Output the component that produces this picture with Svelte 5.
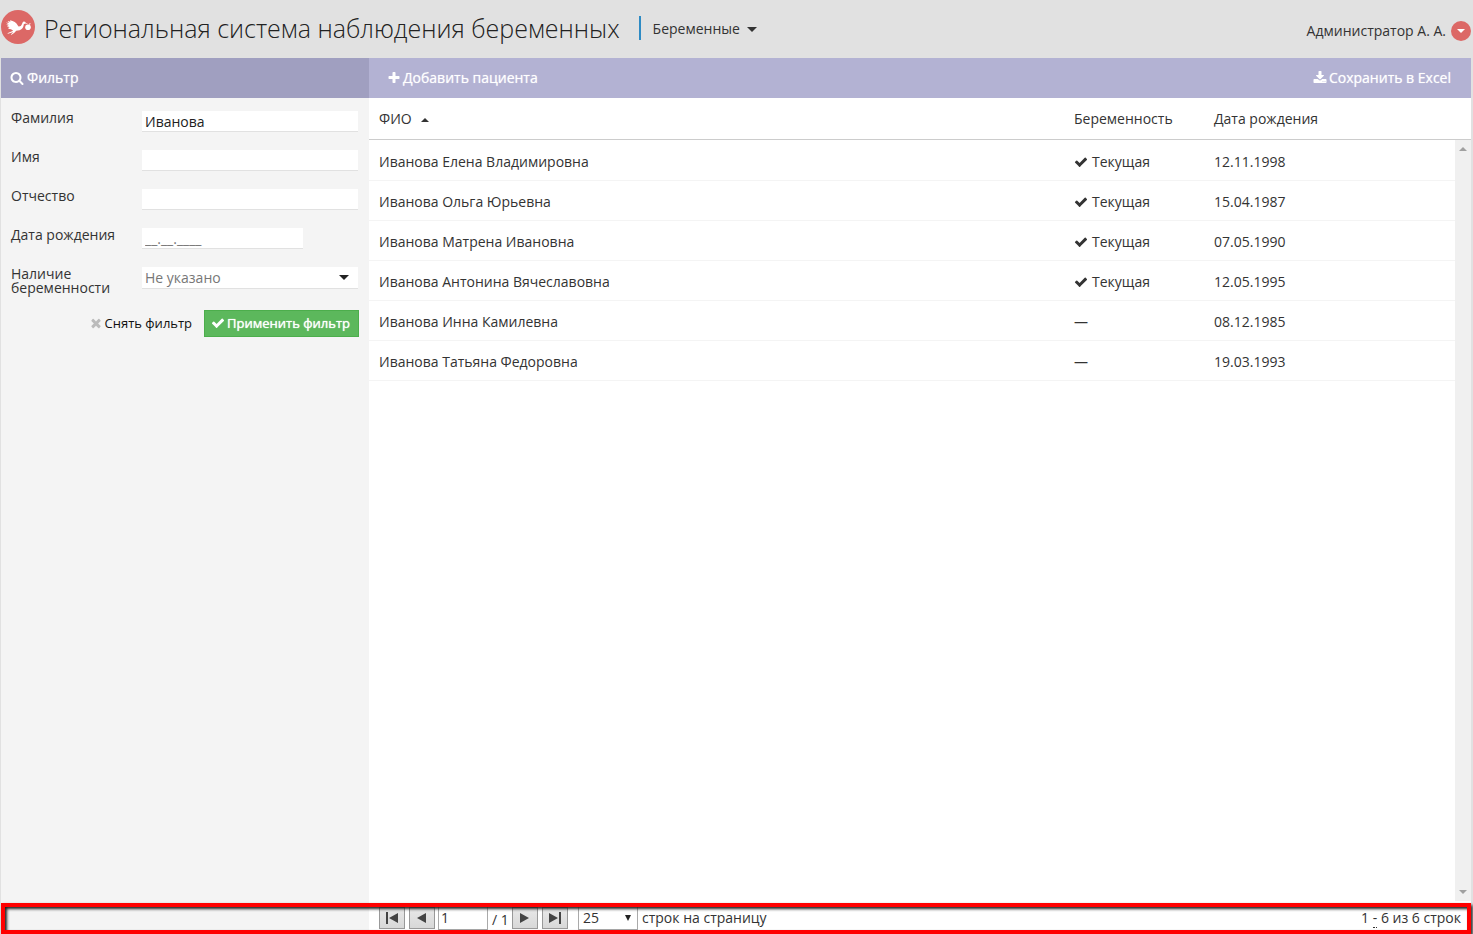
<script lang="ts">
  const patients = [
    { name: 'Иванова Елена Владимировна', current: true, born: '12.11.1998' },
    { name: 'Иванова Ольга Юрьевна', current: true, born: '15.04.1987' },
    { name: 'Иванова Матрена Ивановна', current: true, born: '07.05.1990' },
    { name: 'Иванова Антонина Вячеславовна', current: true, born: '12.05.1995' },
    { name: 'Иванова Инна Камилевна', current: false, born: '08.12.1985' },
    { name: 'Иванова Татьяна Федоровна', current: false, born: '19.03.1993' }
  ];
  let surname = $state('Иванова');
  let firstName = $state('');
  let patronymic = $state('');
  let birth = $state('');
  let page = $state('1');

  const icons = {
    check: 'M1671 566q0 40-28 68l-724 724-136 136q-28 28-68 28t-68-28l-136-136-362-362q-28-28-28-68t28-68l136-136q28-28 68-28t68 28l294 295 656-657q28-28 68-28t68 28l136 136q28 28 28 68z',
    search: 'M1216 832q0-185-131.5-316.5t-316.5-131.5-316.5 131.5-131.5 316.5 131.5 316.5 316.5 131.5 316.5-131.5 131.5-316.5zm512 832q0 52-38 90t-90 38q-54 0-90-38l-343-342q-179 124-399 124-143 0-273.5-55.5t-225-150-150-225-55.5-273.5 55.5-273.5 150-225 225-150 273.5-55.5 273.5 55.5 225 150 150 225 55.5 273.5q0 220-124 399l343 343q37 37 37 90z',
    plus: 'M1600 736v192q0 40-28 68t-68 28h-416v416q0 40-28 68t-68 28h-192q-40 0-68-28t-28-68v-416h-416q-40 0-68-28t-28-68v-192q0-40 28-68t68-28h416v-416q0-40 28-68t68-28h192q40 0 68 28t28 68v416h416q40 0 68 28t28 68z',
    times: 'M1490 1322q0 40-28 68l-136 136q-28 28-68 28t-68-28l-294-294-294 294q-28 28-68 28t-68-28l-136-136q-28-28-28-68t28-68l294-294-294-294q-28-28-28-68t28-68l136-136q28-28 68-28t68 28l294 294 294-294q28-28 68-28t68 28l136 136q28 28 28 68t-28 68l-294 294 294 294q28 28 28 68z',
    download: 'M1344 1344q0-26-19-45t-45-19-45 19-19 45 19 45 45 19 45-19 19-45zm256 0q0-26-19-45t-45-19-45 19-19 45 19 45 45 19 45-19 19-45zm128-224v320q0 40-28 68t-68 28h-1472q-40 0-68-28t-28-68v-320q0-40 28-68t68-28h465l135 136q58 56 136 56t136-56l136-136h464q40 0 68 28t28 68zm-325-569q17 41-14 70l-448 448q-18 19-45 19t-45-19l-448-448q-31-29-14-70 17-39 59-39h256v-448q0-26 19-45t45-19h256q26 0 45 19t19 45v448h256q42 0 59 39z'
  };
</script>

{#snippet icon(d: string)}
  <svg class="icon" viewBox="0 0 1792 1792" aria-hidden="true"><path {d} /></svg>
{/snippet}

<div class="app">
  <header>
    <svg class="logo" viewBox="0 0 34 34" aria-hidden="true">
      <circle cx="17" cy="17" r="17" fill="#dc6866" />
      <path fill="#fff" d="M5 12.6 8 12.9 6.6 11 9.4 11.7 9 10.2Q14.6 11 16.8 15.4L17.6 16.4Q20.2 16.6 20.9 14.2L21.6 12.4Q22.4 11.1 24 11.8L25 13 28 14.4 24.2 13.6 22.8 14.2Q22.6 18.6 18.6 20.2L15.2 20.8 13.4 22.8 10.6 24.8 9.8 24.4 12.4 22 7 23.8 6.4 23.3 12.2 20.8 10 19.2 6.8 18.8 8.6 17.8 5.8 16.6 8 16.2 5.2 14.6 7.8 14.5Z" />
      <circle cx="27" cy="17.2" r="2.8" fill="#fff" />
      <path d="m28.4 13.2 1.6.6-2.2 1.2z" fill="#fff" />
    </svg>
    <h1>Региональная система наблюдения беременных</h1>
    <button class="section">Беременные <span class="caret"></span></button>
    <button class="user">Администратор А. А. <span class="disc"><span class="caret light"></span></span></button>
  </header>

  <div class="body">
    <aside>
      <h2 class="bar">{@render icon(icons.search)}Фильтр</h2>
      <form onsubmit={(e) => e.preventDefault()}>
        <div class="field"><label for="surname">Фамилия</label><input id="surname" type="text" bind:value={surname} /></div>
        <div class="field"><label for="first">Имя</label><input id="first" type="text" bind:value={firstName} /></div>
        <div class="field"><label for="patronymic">Отчество</label><input id="patronymic" type="text" bind:value={patronymic} /></div>
        <div class="field"><label for="birth">Дата рождения</label><input id="birth" class="date" type="text" placeholder="__.__.____" bind:value={birth} /></div>
        <div class="field">
          <label for="pregnancy">Наличие беременности</label>
          <div class="choice">
            <select id="pregnancy"><option>Не указано</option></select>
            <span class="caret"></span>
          </div>
        </div>
        <div class="actions">
          <button type="reset" class="clear">{@render icon(icons.times)}Снять фильтр</button>
          <button type="submit" class="apply">{@render icon(icons.check)}Применить фильтр</button>
        </div>
      </form>
    </aside>

    <main>
      <div class="bar tools">
        <button>{@render icon(icons.plus)}Добавить пациента</button>
        <button>{@render icon(icons.download)}Сохранить в Excel</button>
      </div>
      <div class="grid">
        <table>
          <thead>
            <tr><th>ФИО <span class="caret up"></span></th><th class="status">Беременность</th><th class="born">Дата рождения</th></tr>
          </thead>
          <tbody>
            {#each patients as p}
              <tr>
                <td>{p.name}</td>
                <td>{#if p.current}<span class="current">{@render icon(icons.check)}Текущая</span>{:else}—{/if}</td>
                <td>{p.born}</td>
              </tr>
            {/each}
          </tbody>
        </table>
        <div class="scroll" aria-hidden="true"><span class="caret up"></span><span class="caret"></span></div>
      </div>
      <footer>
        <div class="pair">
          <button aria-label="Первая страница"><svg viewBox="0 0 12 12"><path d="M0 0h2v12H0zM12 1v10L3 6z" /></svg></button>
          <button aria-label="Предыдущая страница"><svg viewBox="0 0 12 12"><path d="M10 1v10L1 6z" /></svg></button>
        </div>
        <input class="page" type="text" aria-label="Страница" bind:value={page} />
        <span class="total">/ 1</span>
        <div class="pair">
          <button aria-label="Следующая страница"><svg viewBox="0 0 12 12"><path d="M1 1v10l9-5z" /></svg></button>
          <button aria-label="Последняя страница"><svg viewBox="0 0 12 12"><path d="M10 0h2v12h-2zM0 1v10l9-5z" /></svg></button>
        </div>
        <div class="size">
          <select id="size"><option>25</option></select>
          <svg viewBox="0 0 6 6" aria-hidden="true"><path d="M0 0h6L3 6z" /></svg>
        </div>
        <label for="size">строк на страницу</label>
        <span class="range">1 <span class="dash">-</span> 6 из 6 строк</span>
      </footer>
    </main>
  </div>
  <div class="highlight"></div>
</div>

<style>
  :global(body) { background: #e1e1e1; }
  .app, .app * { box-sizing: border-box; }
  .app {
    position: relative;
    display: flex;
    flex-direction: column;
    min-height: 100vh;
    padding: 0 2px 0 1px;
    overflow: hidden;
    font: 14px/20px 'Open Sans', sans-serif;
    color: #333;
  }
  button, input, select { font: inherit; color: inherit; margin: 0; padding: 0; border: 0; border-radius: 0; background: none; }
  button { display: inline-flex; align-items: center; cursor: pointer; text-shadow: inherit; }
  h1, h2 { margin: 0; font-weight: 400; }

  .icon { width: 14px; height: 14px; fill: currentColor; flex: none; }
  .caret { display: inline-block; border: 4px solid transparent; border-top: 5px solid currentColor; border-bottom: 0; flex: none; }
  .caret.up { border-top: 0; border-bottom: 4px solid currentColor; }

  header { display: flex; align-items: center; height: 58px; padding-bottom: 2px; }
  .logo { width: 34px; height: 34px; margin: 0 9px 2px 0; flex: none; }
  h1 { font-size: 25px; line-height: 36px; font-weight: 300; color: #222; white-space: nowrap; }
  .section { gap: 7px; height: 24px; margin-left: 19px; padding: 2px 0 0 12px; border-left: 2px solid #2e8bc4; }
  .section .caret { border-width: 5px 5px 0; }
  .user { gap: 5px; margin-left: auto; padding-top: 6px; }
  .disc { display: flex; align-items: center; justify-content: center; width: 20px; height: 20px; border-radius: 50%; background: #dc6866; }
  .light { color: #fff; border-top-width: 4px; }

  .body { display: flex; flex: 1; }
  aside { flex: none; width: 368px; background: #f4f4f4; }
  main { display: flex; flex-direction: column; flex: 1; min-width: 0; background: #fff; }
  .bar { display: flex; align-items: center; gap: 3px; height: 40px; padding: 0 9px; font-size: 14px; line-height: 20px; font-weight: 500; color: #fff; background: #a09fc0; text-shadow: 0 0 1px rgba(255, 255, 255, 0.7); }
  .tools { justify-content: space-between; padding: 0 20px 0 18px; background: #b3b2d3; }
  .tools button { gap: 2px; }

  form { padding: 13px 10px 0; }
  .field { display: flex; align-items: flex-start; height: 39px; padding-right: 1px; }
  .field label { width: 131px; flex: none; line-height: 14px; }
  .field input, .choice { flex: 1; min-width: 0; height: 21px; padding: 0 3px; background: #fff; border-bottom: 1px solid #e1e1e1; color: #222; }
  .field input.date { flex: 0 1 161px; }
  input::placeholder { color: #777; opacity: 1; }
  .field .choice { position: relative; display: flex; align-items: center; height: 22px; }
  .choice select { flex: 1; appearance: none; color: #777; }
  .choice .caret { position: absolute; right: 9px; border-width: 5px 5px 0; pointer-events: none; }
  .actions { display: flex; justify-content: flex-end; gap: 6px; padding-top: 4px; font-size: 13px; }
  .actions button { height: 27px; gap: 2px; padding: 0 6px 2px; white-space: nowrap; }
  .clear { color: #111; }
  .clear .icon { color: #bbb; }
  .actions .apply { padding: 0 8px 2px 6px; color: #fff; background: #5cb85c; border: 1px solid #4cae4c; text-shadow: 0 0 1px #fff; }

  .grid { position: relative; display: flex; flex: 1; }
  table { flex: 1; width: 100%; height: min-content; border-collapse: separate; border-spacing: 0; table-layout: fixed; text-align: left; }
  th, td { padding: 0 10px; font-weight: 400; }
  th { height: 42px; border-bottom: 1px solid #ccc; }
  td { height: 40px; padding-top: 3px; border-bottom: 1px solid #f4f4f4; }
  tbody tr:first-child td { height: 41px; }
  .status { width: 140px; }
  .born { width: 267px; }
  th .caret { margin-left: 6px; vertical-align: 2px; }
  .current { display: flex; align-items: center; gap: 4px; }
  .scroll { position: absolute; top: 42px; right: 0; bottom: 0; width: 16px; display: flex; flex-direction: column; align-items: center; justify-content: space-between; padding: 7px 0; background: #f0f0f0; color: #a0a0a0; }
  .scroll .caret:last-child { border-top-width: 4px; }

  footer { display: flex; align-items: center; height: 33px; padding: 0 10px; }
  .pair { display: flex; gap: 4px; }
  .pair button { width: 26px; height: 22px; justify-content: center; border: 1px solid #999; background: linear-gradient(#e8e8e8, #d8d8d8); }
  .pair svg { width: 12px; height: 12px; fill: #444; }
  .page { width: 50px; height: 24px; margin-left: 3px; padding: 0 2px; border: 1px solid #aaa; }
  .total { width: 24px; padding: 5px 0 0 4px; white-space: nowrap; }
  .size { position: relative; display: flex; align-items: center; width: 60px; height: 24px; margin: 0 4px 0 10px; border: 1px solid #aaa; }
  .size select { width: 100%; padding-left: 4px; appearance: none; }
  .size svg { position: absolute; right: 6px; width: 6px; height: 6px; fill: #222; pointer-events: none; }
  .range { margin-left: auto; }
  .dash { border-bottom: 1px dotted #333; }
  .highlight { position: absolute; left: 1px; right: 2px; bottom: 0; height: 31px; border: 4px solid #f00; box-shadow: 2px 2px 3px #333, inset 2px 2px 3px #222; pointer-events: none; }
</style>
